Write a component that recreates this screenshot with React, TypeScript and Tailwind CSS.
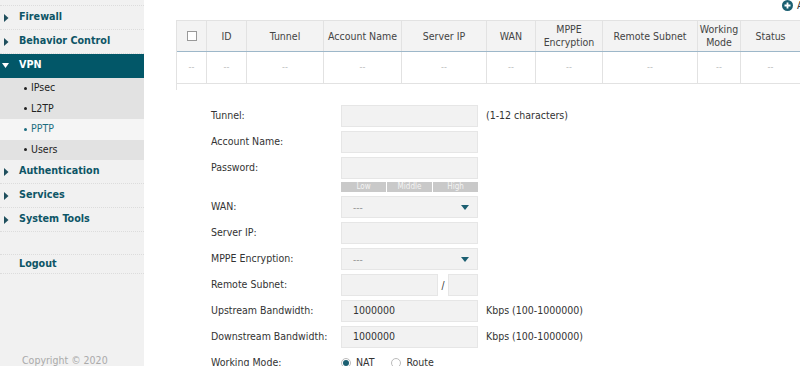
import React from "react";

function Tri({ down = false, white = false }: { down?: boolean; white?: boolean }) {
  const c = white ? "#ffffff" : "#1f4f5d";
  return down ? (
    <svg width="7" height="5" viewBox="0 0 7 5" className="shrink-0">
      <path d="M0 0 L7 0 L3.5 5 Z" fill={c} />
    </svg>
  ) : (
    <svg width="5" height="8" viewBox="0 0 5 8" className="shrink-0">
      <path d="M0 0 L4.5 4 L0 8 Z" fill={c} />
    </svg>
  );
}

function MainItem({ label, open = false }: { label: string; open?: boolean }) {
  return (
    <div
      className={
        "h-[24px] shrink-0 flex items-center border-b border-dotted " +
        (open ? "bg-[#025768] text-white border-[#025768] pl-[2px]" : "text-[#0d5566] border-[#dcdcdc] pl-[4px]")
      }
    >
      <div className={open ? "w-[17px] flex" : "w-[15px] flex"}>
        <Tri down={open} white={open} />
      </div>
      <span className="font-bold text-[10.7px]">{label}</span>
    </div>
  );
}

function SubItem({ label, active = false }: { label: string; active?: boolean }) {
  return (
    <div
      className={
        "h-[20.5px] shrink-0 flex items-center pl-[24px] text-[10.5px] " +
        (active ? "bg-[#f5f5f5] text-[#1d6d80]" : "bg-[#e2e2e2] text-[#222]")
      }
    >
      <span className="w-[7px] h-[3px] flex items-center">
        <span className="w-[3px] h-[3px] rounded-full bg-current" />
      </span>
      <span>{label}</span>
    </div>
  );
}

const cols: { w: number; label: React.ReactNode }[] = [
  { w: 30, label: null },
  { w: 40, label: "ID" },
  { w: 77, label: "Tunnel" },
  { w: 78, label: "Account Name" },
  { w: 85, label: "Server IP" },
  { w: 49, label: "WAN" },
  { w: 67, label: (<>MPPE<br />Encryption</>) },
  { w: 95, label: "Remote Subnet" },
  { w: 43, label: (<>Working<br />Mode</>) },
  { w: 60, label: "Status" },
];

function Input({ w = 137, value }: { w?: number; value?: string }) {
  return (
    <div
      className="h-[22px] shrink-0 bg-[#f2f2f2] border border-[#e6e6e6] flex items-center pl-[11px] text-[10.5px] text-[#333]"
      style={{ width: w }}
    >
      {value}
    </div>
  );
}

function Select() {
  return (
    <div className="h-[22px] w-[137px] bg-[#f2f2f2] border border-[#e6e6e6] flex items-center justify-between pl-[11px] pr-[8px] text-[10px] text-[#999]">
      <span>---</span>
      <svg width="8" height="5" viewBox="0 0 8 5">
        <path d="M0 0 L8 0 L4 5 Z" fill="#1b5f71" />
      </svg>
    </div>
  );
}

function Row({ label, children, extra }: { label: string; children: React.ReactNode; extra?: string }) {
  return (
    <div className="h-[22px] flex items-center mb-[4px]">
      <div className="w-[130px] shrink-0 text-[10.5px] text-[#333]">{label}</div>
      {children}
      {extra && <div className="ml-[8px] text-[10.5px] text-[#333]">{extra}</div>}
    </div>
  );
}

function Radio({ checked = false }: { checked?: boolean }) {
  return (
    <span className="w-[10px] h-[10px] rounded-full border border-[#bbb] bg-white flex items-center justify-center">
      {checked && <span className="w-[6px] h-[6px] rounded-full bg-[#1b5f71]" />}
    </span>
  );
}

export default function App() {
  return (
    <div
      className="w-[800px] h-[366px] flex overflow-hidden bg-white"
      style={{ fontFamily: '"DejaVu Sans Condensed", "DejaVu Sans", Verdana, sans-serif' }}
    >
      <aside className="w-[144px] shrink-0 bg-[#f1f1f1] flex flex-col pt-[5px]">
        <div className="border-t border-dotted border-[#dcdcdc]" />
        <MainItem label="Firewall" />
        <MainItem label="Behavior Control" />
        <MainItem label="VPN" open />
        <SubItem label="IPsec" />
        <SubItem label="L2TP" />
        <SubItem label="PPTP" active />
        <SubItem label="Users" />
        <MainItem label="Authentication" />
        <MainItem label="Services" />
        <MainItem label="System Tools" />
        <div className="h-[22px] shrink-0" />
        <div className="h-[20px] shrink-0 flex items-center pl-[19px] border-y border-dotted border-[#dcdcdc] font-bold text-[10.7px] text-[#0d5566]">
          Logout
        </div>
        <div className="flex-1" />
        <div className="pl-[22px] pb-[0px] text-[10.5px] text-[#aaa] leading-[12px]">
          Copyright © 2020
        </div>
      </aside>

      <main className="flex-1 block">
        <div className="h-[20px] pl-[638px] flex items-start overflow-hidden whitespace-nowrap">
          <div className="flex items-center gap-[4px]">
            <svg width="11" height="11" viewBox="0 0 11 11" className="shrink-0">
              <circle cx="5.5" cy="5.5" r="5.5" fill="#1b5f71" />
              <path d="M5.5 2.5 V8.5 M2.5 5.5 H8.5" stroke="#fff" strokeWidth="1.8" />
            </svg>
            <span className="text-[10.5px] text-[#333] leading-[11px]">Add</span>
          </div>
        </div>

        <div className="ml-[32px] border-l border-[#e2e2e2]">
          <div className="flex h-[32px] border-t border-[#e2e2e2] border-b border-b-[#9db7c9] bg-[#f3f3f3]">
            {cols.map((c, i) => (
              <div
                key={i}
                className="border-r border-[#e2e2e2] flex items-center justify-center text-center text-[10.5px] leading-[13px] text-[#444] shrink-0"
                style={{ width: c.w }}
              >
                {i === 0 ? <span className="w-[10px] h-[10px] border border-[#999] bg-white" /> : c.label}
              </div>
            ))}
          </div>
          <div className="flex h-[32px] border-b border-[#e2e2e2]">
            {cols.map((c, i) => (
              <div
                key={i}
                className="border-r border-[#e2e2e2] flex items-center justify-center text-[9px] text-[#bbb] shrink-0"
                style={{ width: c.w }}
              >
                --
              </div>
            ))}
          </div>
          <div className="h-[6px]" />
        </div>

        <div className="ml-[67px] mt-[15px] flex flex-col">
          <Row label="Tunnel:" extra="(1-12 characters)">
            <Input />
          </Row>
          <Row label="Account Name:">
            <Input />
          </Row>
          <div className="h-[22px] flex items-center">
            <div className="w-[130px] shrink-0 text-[10.5px] text-[#333]">Password:</div>
            <Input />
          </div>
          <div className="flex mt-[3px] mb-[4px]">
            <div className="w-[130px] shrink-0" />
            <div className="w-[137px] h-[10px] flex gap-[1px] text-[8px] leading-[10px] text-[#f4f4f4]">
              <div className="flex-1 bg-[#c9c9c9] text-center">Low</div>
              <div className="flex-1 bg-[#c9c9c9] text-center">Middle</div>
              <div className="flex-1 bg-[#c9c9c9] text-center">High</div>
            </div>
          </div>
          <Row label="WAN:">
            <Select />
          </Row>
          <Row label="Server IP:">
            <Input />
          </Row>
          <Row label="MPPE Encryption:">
            <Select />
          </Row>
          <Row label="Remote Subnet:">
            <Input w={97} />
            <span className="w-[10px] text-center text-[10px] text-[#333]">/</span>
            <Input w={30} />
          </Row>
          <Row label="Upstream Bandwidth:" extra="Kbps (100-1000000)">
            <Input value="1000000" />
          </Row>
          <Row label="Downstream Bandwidth:" extra="Kbps (100-1000000)">
            <Input value="1000000" />
          </Row>
          <div className="h-[22px] flex items-center">
            <div className="w-[130px] shrink-0 text-[10.5px] text-[#333]">Working Mode:</div>
            <div className="flex items-center gap-[5px] text-[10.5px] text-[#333]">
              <Radio checked />
              <span>NAT</span>
              <span className="ml-[7px]" />
              <Radio />
              <span>Route</span>
            </div>
          </div>
        </div>
      </main>
    </div>
  );
}
